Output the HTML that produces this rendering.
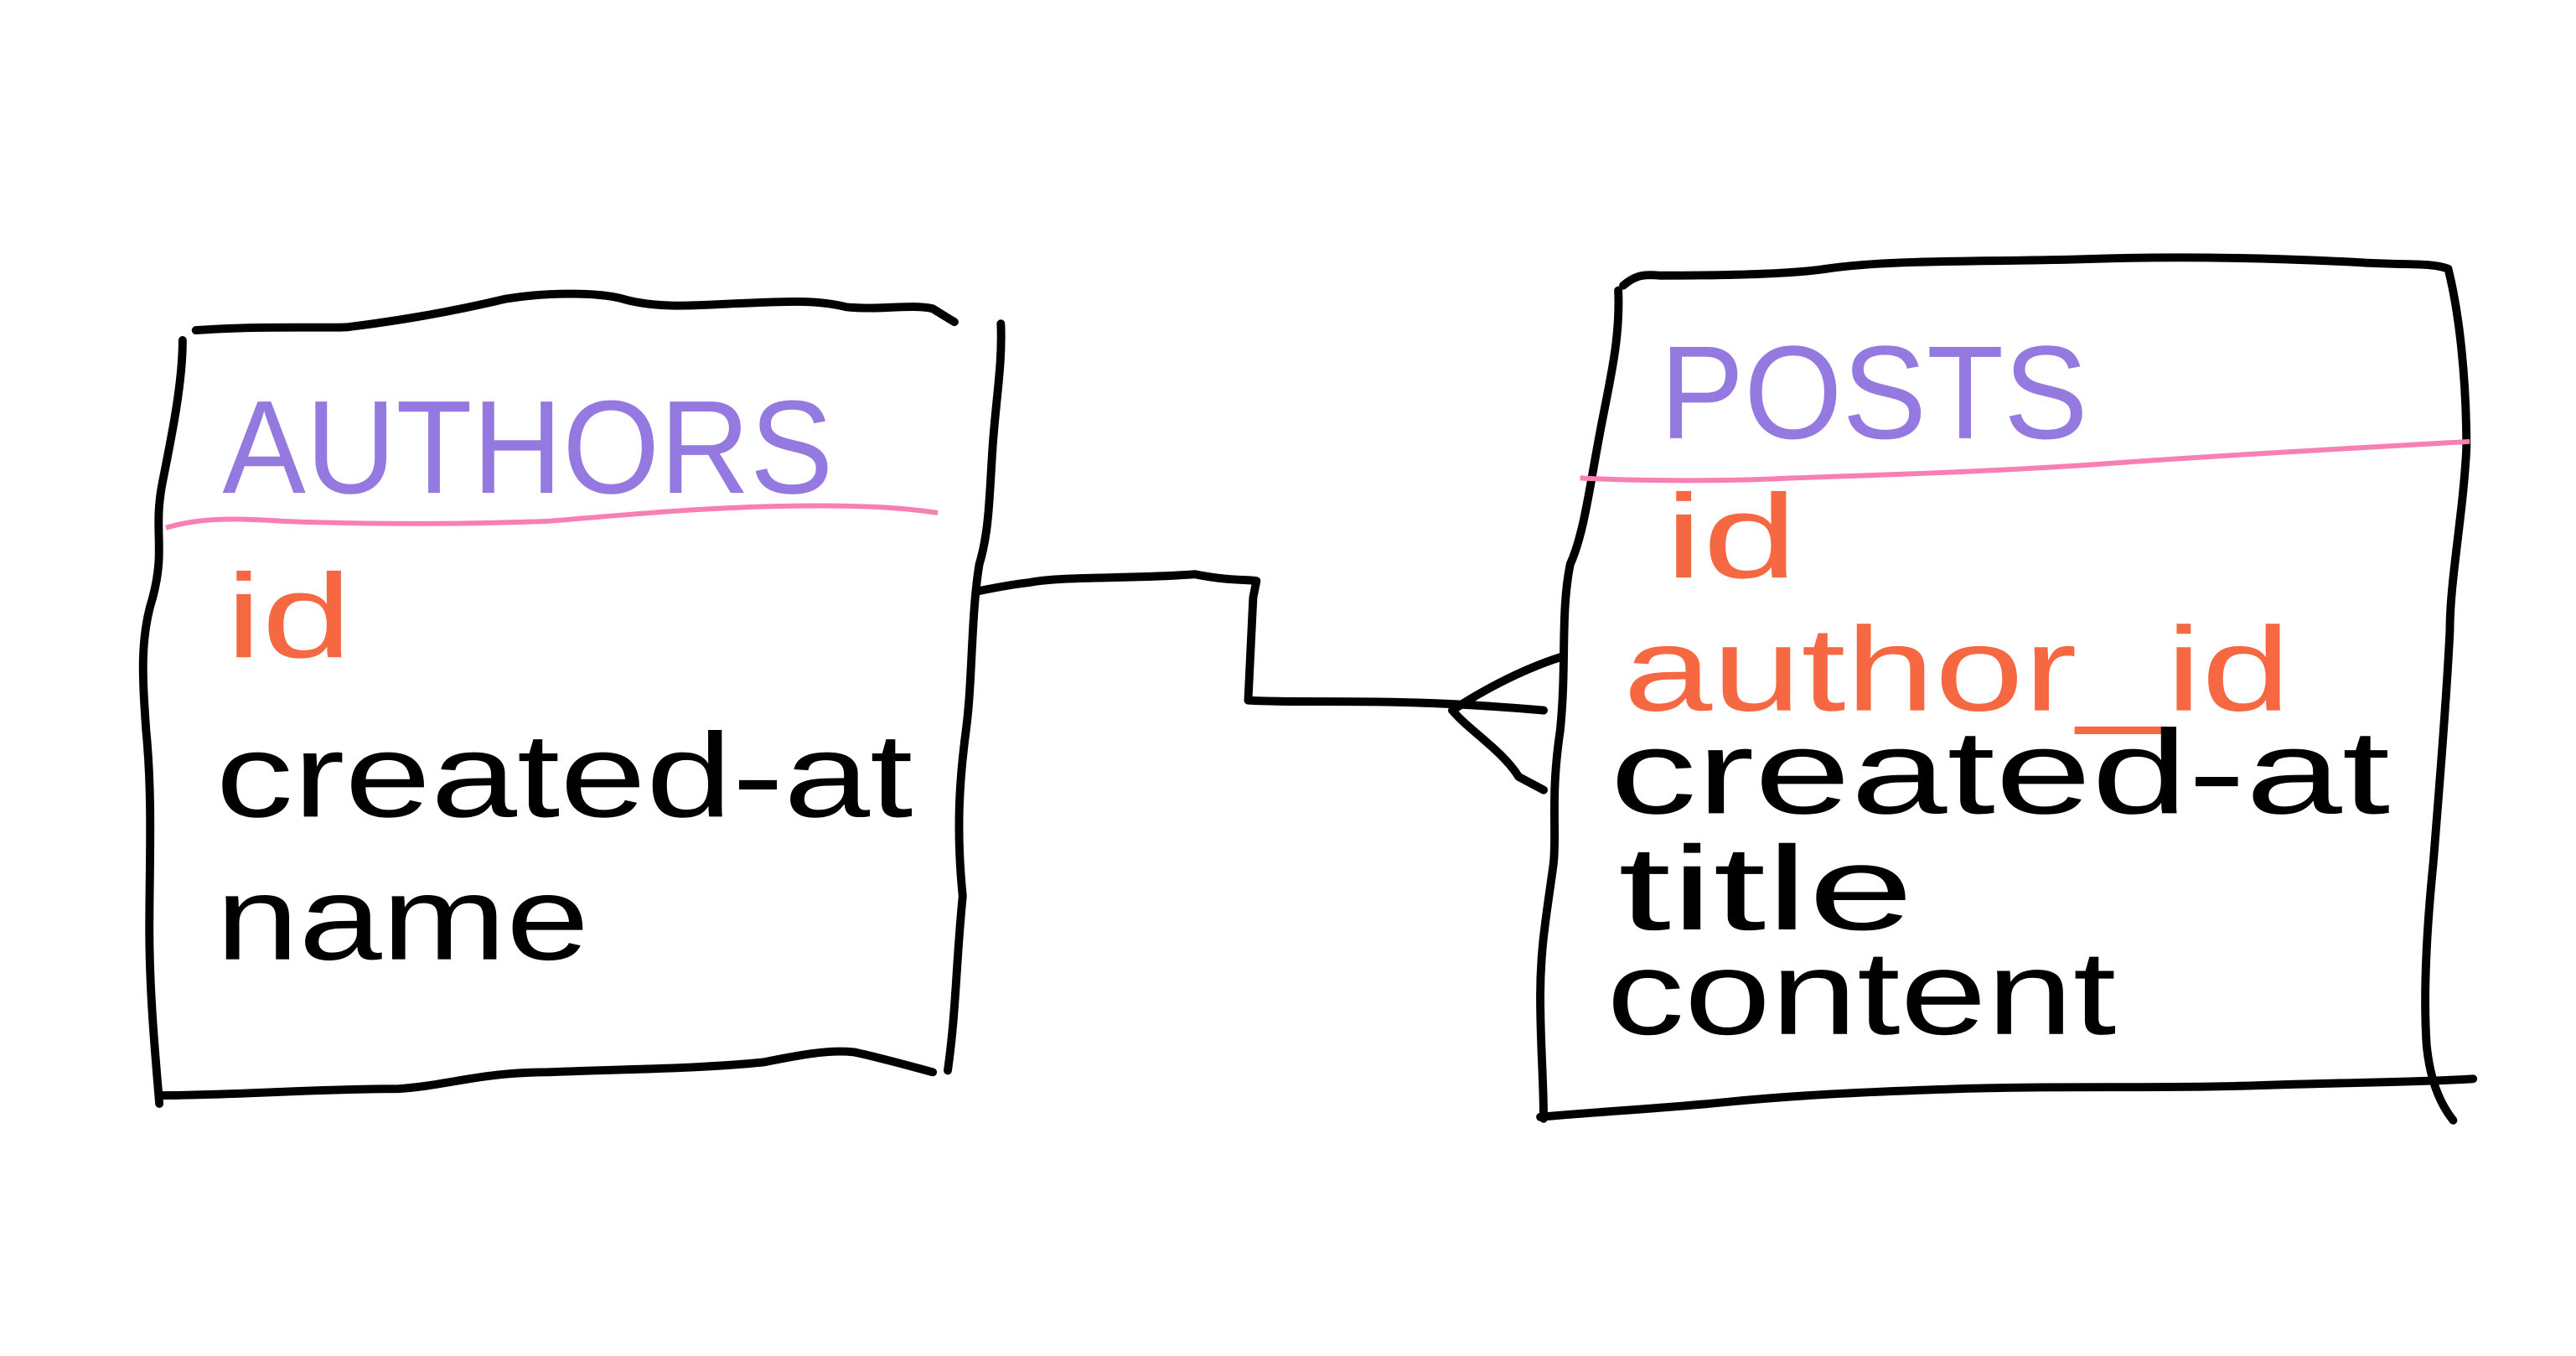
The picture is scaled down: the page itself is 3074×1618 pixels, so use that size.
<!DOCTYPE html>
<html><head><meta charset="utf-8"><style>
html,body{margin:0;padding:0;background:#fff;width:3074px;height:1618px;overflow:hidden}
svg{display:block}
text{font-family:"Liberation Sans Narrow","Liberation Sans",sans-serif;}
</style></head><body>
<svg width="3074" height="1618" viewBox="0 0 1552 817" preserveAspectRatio="none" xmlns="http://www.w3.org/2000/svg">
<g fill="none" stroke="#000" stroke-width="5" stroke-linecap="round" stroke-linejoin="round">
<path d="M118,199 C160,196 200,198 210,197 C250,192 280,186 305,180 C330,176 360,176 375,180 C395,186 420,184 440,183 C470,182 490,180 510,185 C530,187 550,183 562,186 L575,194"/>
<path d="M110,205 C110,230 104,260 98,290 C92,320 100,330 92,360 C84,385 86,410 88,440 C92,480 90,520 90,560 C90,600 94,640 96,665"/>
<path d="M603,195 C604,220 600,240 598,270 C596,300 596,320 590,340 C585,370 586,410 582,440 C578,470 576,500 580,540 C576,580 576,610 571,645"/>
<path d="M96,660 C140,660 190,656 240,656 C270,654 290,646 330,646 C380,644 420,644 460,640 C480,636 500,632 515,634 C525,636 540,640 562,646"/>
<path d="M978,172 C985,166 990,165 1000,166 C1040,166 1080,165 1100,162 C1140,156 1200,158 1260,156 C1320,154 1380,156 1420,158 C1450,160 1465,158 1475,162"/>
<path d="M975,175 C976,200 972,220 966,250 C958,290 955,320 946,340 C940,370 944,400 940,440 C934,480 938,500 936,520 C932,550 928,570 928,600 C928,630 930,650 930,674"/>
<path d="M1475,162 C1482,190 1486,230 1486,270 C1484,310 1476,350 1476,380 C1474,420 1470,470 1466,520 C1462,560 1460,600 1462,630 C1464,650 1470,665 1478,675"/>
<path d="M928,673 C960,670 1000,668 1040,664 C1080,660 1120,658 1180,656 C1240,654 1300,656 1360,654 C1420,652 1460,652 1490,650"/>
<path d="M590,356 C600,354 610,352 620,351 C640,347 680,349 720,346 C740,350 750,349 757,350 L755,360 L752,422 C790,424 840,420 930,428"/>
<path d="M875,428 C890,418 915,404 940,396"/>
<path d="M875,428 C885,440 905,452 915,468 L930,476"/>
</g>
<path d="M100,318 C120,312 140,312 170,314 C220,316 280,316 330,314 C380,310 420,306 470,305 C520,304 545,306 565,309" fill="none" stroke="#f77fb4" stroke-width="3"/>
<path d="M952,288 C990,290 1040,290 1080,288 C1140,286 1200,284 1260,280 C1340,274 1420,270 1488,266" fill="none" stroke="#f77fb4" stroke-width="3"/>
<g font-size="80" fill="#9479e0">
<text x="134" y="297" textLength="368" lengthAdjust="spacingAndGlyphs">AUTHORS</text>
<text x="1000" y="264" textLength="258" lengthAdjust="spacingAndGlyphs">POSTS</text>
</g>
<g font-size="72" fill="#f56842">
<text x="136" y="396" textLength="76" lengthAdjust="spacingAndGlyphs">id</text>
<text x="1003" y="348" textLength="80" lengthAdjust="spacingAndGlyphs">id</text>
<text x="978" y="428" textLength="402" lengthAdjust="spacingAndGlyphs">author_id</text>
</g>
<g font-size="72" fill="#000">
<text x="130" y="492" textLength="420" lengthAdjust="spacingAndGlyphs">created-at</text>
<text x="130" y="578" textLength="225" lengthAdjust="spacingAndGlyphs">name</text>
<text x="970" y="490" textLength="470" lengthAdjust="spacingAndGlyphs">created-at</text>
<text x="975" y="560" textLength="178" lengthAdjust="spacingAndGlyphs">title</text>
<text x="968" y="623" textLength="307" lengthAdjust="spacingAndGlyphs">content</text>
</g>
</svg>
</body></html>
